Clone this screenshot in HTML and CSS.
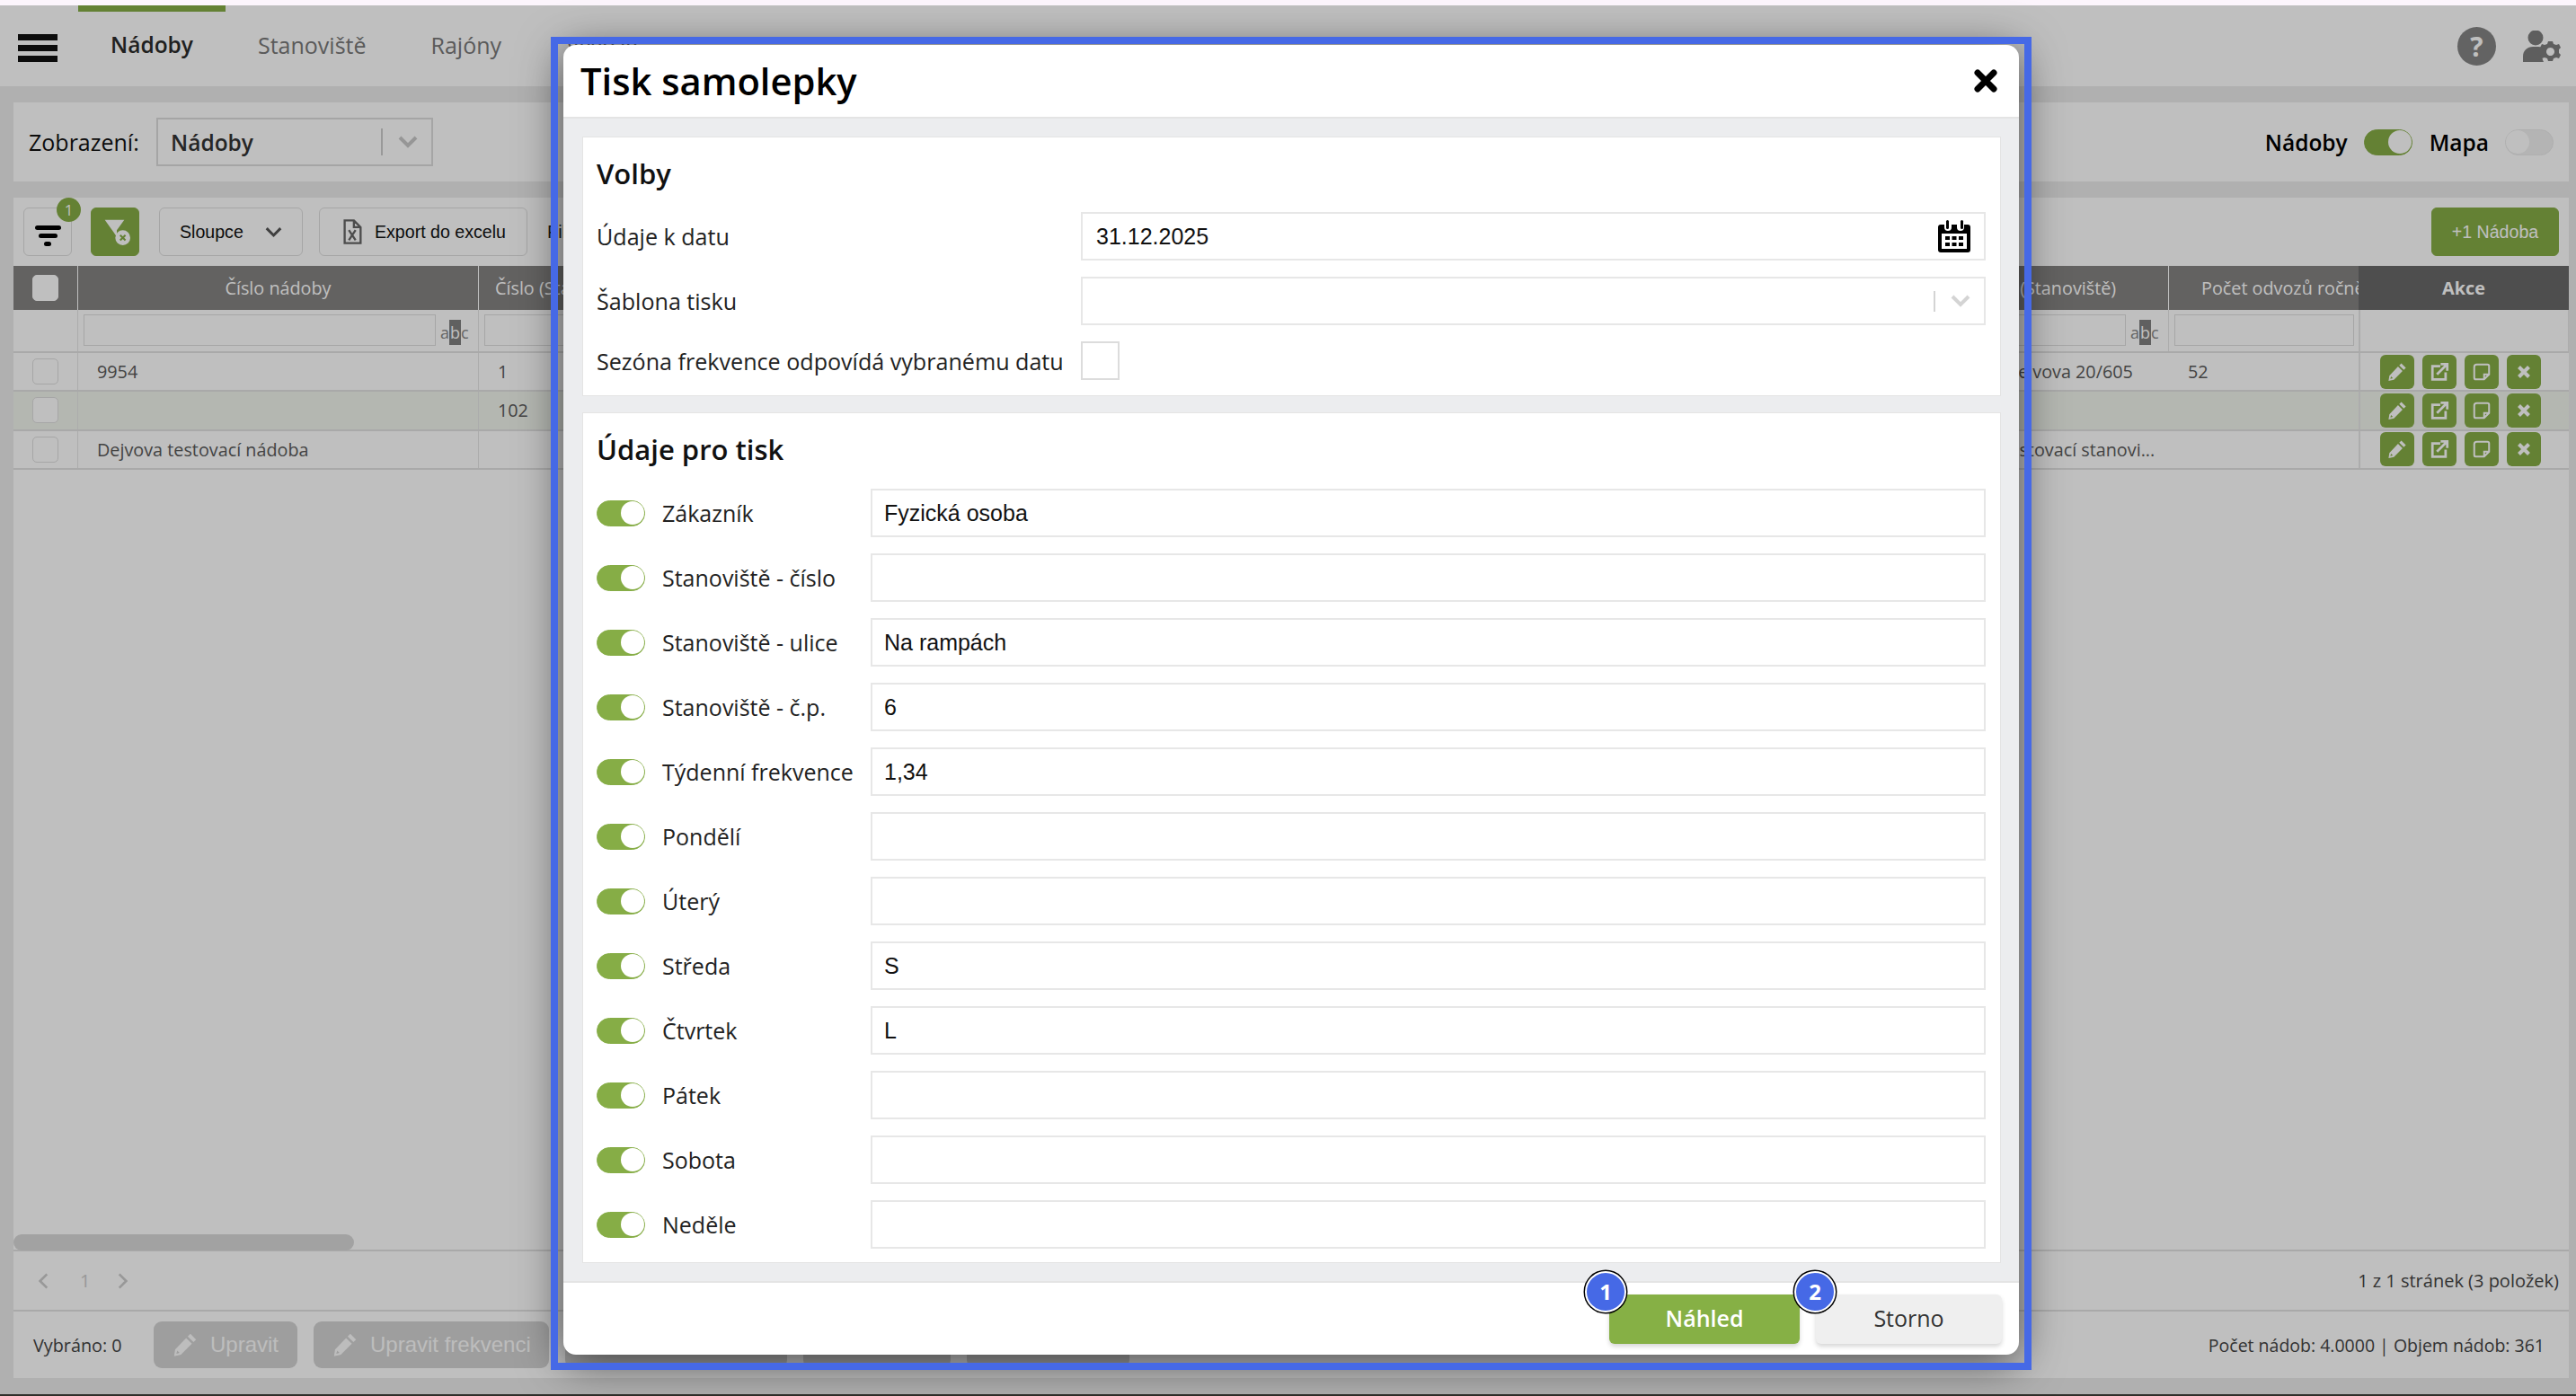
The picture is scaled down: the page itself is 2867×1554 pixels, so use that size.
FILE: index.html
```html
<!DOCTYPE html>
<html lang="cs">
<head>
<meta charset="utf-8">
<title>Tisk samolepky</title>
<link rel="stylesheet" href="styles.css">
</head>
<body>
<div class="strip-top"></div>
<div class="app">
  <nav class="nav">
    <div class="burger"><span></span><span></span><span></span></div>
    <a class="tab tab-active">Nádoby</a>
    <a class="tab">Stanoviště</a>
    <a class="tab">Rajóny</a>
    <a class="tab">Vývozy</a>
    <div class="nav-right">
      <span class="help">?</span>
      <svg class="user-gear" viewBox="0 0 42 35"><circle cx="14" cy="8" r="8.5"/><path d="M0 35v-6c0-7 5-11 11-11h6c3 0 5 1 7 2-3 3-4 9-1 15z"/><path fill-rule="evenodd" d="M28 12h5l1 3 3 1 3-1 2 4-2 2v4l2 2-2 4-3-1-3 1-1 3h-5l-1-3-3-1-3 1-2-4 2-2v-4l-2-2 2-4 3 1 3-1zM30.500 19a4.500 4.500 0 1 0 .01 0z"/></svg>
    </div>
  </nav>
  <div class="content">
    <section class="panel view-bar">
      <label class="view-label">Zobrazení:</label>
      <div class="select-box">
        <span class="select-value">Nádoby</span>
        <span class="select-sep"></span>
        <svg class="chev chev-bg" viewBox="0 0 22 14"><path d="M2 2l9 9 9-9"/></svg>
      </div>
      <div class="view-switch">
        <span class="switch-label">Nádoby</span>
        <span class="toggle"><i></i></span>
        <span class="switch-label">Mapa</span>
        <span class="toggle toggle-off"><i></i></span>
      </div>
    </section>

    <section class="panel main-panel">
      <div class="toolbar">
        <button class="tool tool-filter">
          <span class="bars"><i></i><i></i><i></i></span>
          <span class="count">1</span>
        </button>
        <button class="tool tool-green">
          <svg class="funnel" viewBox="0 0 36 38"><path d="M2 3h26l-10 14v9l-4-6z" class="fn-fill"/><circle cx="26" cy="27" r="10" class="fn-fill"/><path d="M22.500 23.500l7 7M29.500 23.500l-7 7" class="fn-x"/></svg>
        </button>
        <button class="tool tool-text tool-columns">Sloupce
          <svg class="chev chev-tool" viewBox="0 0 22 14"><path d="M2 2l9 9 9-9"/></svg>
        </button>
        <button class="tool tool-text tool-export">
          <svg class="file" viewBox="0 0 23 30"><path d="M2.500 1.500h11l8 8v19h-19z M13.500 1.500v8h8" class="file-line"/><path d="M7.500 13l8 12M15.500 13l-8 12" class="file-x"/></svg>
          Export do excelu
        </button>
        <span class="tool-more">Filtr</span>
        <button class="tool tool-add">+1 Nádoba</button>
      </div>

      <div class="t-row t-head">
        <div class="cell cell-check"><span class="check check-head"></span></div>
        <div class="cell cell-center">Číslo nádoby</div>
        <div class="cell cell-left-head">Číslo (Stanoviště)</div>
        <div class="cell"></div>
        <div class="cell cell-center cell-addr-head">Adresa (Stanoviště)</div>
        <div class="cell cell-clip">Počet odvozů ročně</div>
        <div class="cell cell-actions-head">Akce</div>
      </div>

      <div class="t-row t-filter">
        <div class="cell"></div>
        <div class="cell cell-f"><span class="f-input"></span><span class="abc">a<b>b</b>c</span></div>
        <div class="cell cell-f"><span class="f-input"></span><span class="abc">a<b>b</b>c</span></div>
        <div class="cell"></div>
        <div class="cell cell-f"><span class="f-input"></span><span class="abc">a<b>b</b>c</span></div>
        <div class="cell cell-f"><span class="f-input"></span></div>
        <div class="cell cell-act"></div>
      </div>

      <div class="t-row t-data">
        <div class="cell cell-check"><span class="check"></span></div>
        <div class="cell">9954</div>
        <div class="cell">1</div>
        <div class="cell"></div>
        <div class="cell cell-addr">Praha 6, Dejvova 20/605</div>
        <div class="cell">52</div>
        <div class="cell cell-act">
          <span class="act"><svg viewBox="0 0 24 24"><path d="M17 1.500l5.500 5.500-2.500 2.500-5.500-5.500zM13 5.500l5.500 5.500L8 21.500l-6.500 1.500 1-6.500zM4.500 17.500l-.8 3 3-.8z" fill-rule="evenodd"/></svg></span>
          <span class="act"><svg viewBox="0 0 24 24"><path class="ln" d="M13 5H3.500v16h16v-8.500M9 15L21 3M13.500 2.500h8v8"/></svg></span>
          <span class="act"><svg viewBox="0 0 24 24"><path class="ln ln-thin" d="M6 3h13a2 2 0 0 1 2 2v10l-6 6H5a2 2 0 0 1-2-2V6a3 3 0 0 1 3-3zM21 15h-6v6"/></svg></span>
          <span class="act"><svg viewBox="0 0 24 24"><path class="ln ln-x" d="M6 6l12 12M18 6L6 18"/></svg></span>
        </div>
      </div>

      <div class="t-row t-data t-hl">
        <div class="cell cell-check"><span class="check"></span></div>
        <div class="cell"></div>
        <div class="cell">102</div>
        <div class="cell"></div>
        <div class="cell"></div>
        <div class="cell"></div>
        <div class="cell cell-act">
          <span class="act"><svg viewBox="0 0 24 24"><path d="M17 1.500l5.500 5.500-2.500 2.500-5.500-5.500zM13 5.500l5.500 5.500L8 21.500l-6.500 1.500 1-6.500zM4.500 17.500l-.8 3 3-.8z" fill-rule="evenodd"/></svg></span>
          <span class="act"><svg viewBox="0 0 24 24"><path class="ln" d="M13 5H3.500v16h16v-8.500M9 15L21 3M13.500 2.500h8v8"/></svg></span>
          <span class="act"><svg viewBox="0 0 24 24"><path class="ln ln-thin" d="M6 3h13a2 2 0 0 1 2 2v10l-6 6H5a2 2 0 0 1-2-2V6a3 3 0 0 1 3-3zM21 15h-6v6"/></svg></span>
          <span class="act"><svg viewBox="0 0 24 24"><path class="ln ln-x" d="M6 6l12 12M18 6L6 18"/></svg></span>
        </div>
      </div>

      <div class="t-row t-data">
        <div class="cell cell-check"><span class="check"></span></div>
        <div class="cell">Dejvova testovací nádoba</div>
        <div class="cell"></div>
        <div class="cell"></div>
        <div class="cell cell-addr">Dejvova testovací stanovi...</div>
        <div class="cell"></div>
        <div class="cell cell-act">
          <span class="act"><svg viewBox="0 0 24 24"><path d="M17 1.500l5.500 5.500-2.500 2.500-5.500-5.500zM13 5.500l5.500 5.500L8 21.500l-6.500 1.500 1-6.500zM4.500 17.500l-.8 3 3-.8z" fill-rule="evenodd"/></svg></span>
          <span class="act"><svg viewBox="0 0 24 24"><path class="ln" d="M13 5H3.500v16h16v-8.500M9 15L21 3M13.500 2.500h8v8"/></svg></span>
          <span class="act"><svg viewBox="0 0 24 24"><path class="ln ln-thin" d="M6 3h13a2 2 0 0 1 2 2v10l-6 6H5a2 2 0 0 1-2-2V6a3 3 0 0 1 3-3zM21 15h-6v6"/></svg></span>
          <span class="act"><svg viewBox="0 0 24 24"><path class="ln ln-x" d="M6 6l12 12M18 6L6 18"/></svg></span>
        </div>
      </div>

      <div class="t-spacer"></div>
      <div class="scroll-track"><div class="scroll-thumb"></div></div>

      <div class="pager">
        <svg class="pg-arrow" viewBox="0 0 14 22"><path d="M12 2L3 11l9 9"/></svg>
        <span class="pg-num">1</span>
        <svg class="pg-arrow" viewBox="0 0 14 22"><path d="M2 2l9 9-9 9"/></svg>
        <span class="pg-info">1 z 1 stránek (3 položek)</span>
      </div>

      <div class="grid-foot">
        <span class="selected">Vybráno: 0</span>
        <button class="off-btn off-1"><svg viewBox="0 0 24 24"><path d="M17 1.500l5.500 5.500-2.500 2.500-5.500-5.500zM13 5.500l5.500 5.500L8 21.500l-6.500 1.500 1-6.500zM4.500 17.500l-.8 3 3-.8z" fill-rule="evenodd"/></svg>Upravit</button>
        <button class="off-btn off-2"><svg viewBox="0 0 24 24"><path d="M17 1.500l5.500 5.500-2.500 2.500-5.500-5.500zM13 5.500l5.500 5.500L8 21.500l-6.500 1.500 1-6.500zM4.500 17.500l-.8 3 3-.8z" fill-rule="evenodd"/></svg>Upravit frekvenci</button>
        <button class="off-btn off-3"></button>
        <button class="off-btn off-4"></button>
        <button class="off-btn off-5"></button>
        <span class="totals">Počet nádob: 4.0000 | Objem nádob: 361</span>
      </div>
    </section>
  </div>
  <div class="backdrop"></div>
</div>
<div class="strip-bottom"></div>

<div class="modal">
  <header class="m-head">
    <h1>Tisk samolepky</h1>
    <svg class="m-close" viewBox="0 0 26 26"><path d="M4 4l18 18M22 4L4 22"/></svg>
  </header>
  <div class="m-body">
    <section class="card">
      <h2>Volby</h2>
      <div class="opt-row">
        <label>Údaje k datu</label>
        <div class="field field-date">
          <input class="inp" value="31.12.2025" readonly>
          <svg class="cal" viewBox="0 0 36 36"><path fill-rule="evenodd" d="M3 5h4v3a4 4 0 0 0 8 0V5h6v3a4 4 0 0 0 8 0V5h4a3 3 0 0 1 3 3v25a3 3 0 0 1-3 3H3a3 3 0 0 1-3-3V8a3 3 0 0 1 3-3zM4 15v17h28V15z"/><rect x="9" y="0" width="3" height="10" rx="1.500"/><rect x="25" y="0" width="3" height="10" rx="1.500"/><path d="M8 18h5v4H8zM15.500 18h5v4h-5zM23 18h5v4h-5zM8 25h5v4H8zM15.500 25h5v4h-5zM23 25h5v4h-5z"/></svg>
        </div>
      </div>
      <div class="opt-row">
        <label>Šablona tisku</label>
        <div class="field field-select">
          <span class="select-sep select-sep-m"></span>
          <svg class="chev chev-m" viewBox="0 0 22 14"><path d="M2 2l9 9 9-9"/></svg>
        </div>
      </div>
      <div class="opt-row opt-last">
        <label>Sezóna frekvence odpovídá vybranému datu</label>
        <span class="box"></span>
      </div>
    </section>

    <section class="card card-print">
      <h2 class="h-print">Údaje pro tisk</h2>
      <div class="p-row"><span class="toggle toggle-m"><i></i></span><label>Zákazník</label><input class="inp" value="Fyzická osoba" readonly></div>
      <div class="p-row"><span class="toggle toggle-m"><i></i></span><label>Stanoviště - číslo</label><input class="inp" value="" readonly></div>
      <div class="p-row"><span class="toggle toggle-m"><i></i></span><label>Stanoviště - ulice</label><input class="inp" value="Na rampách" readonly></div>
      <div class="p-row"><span class="toggle toggle-m"><i></i></span><label>Stanoviště - č.p.</label><input class="inp" value="6" readonly></div>
      <div class="p-row"><span class="toggle toggle-m"><i></i></span><label>Týdenní frekvence</label><input class="inp" value="1,34" readonly></div>
      <div class="p-row"><span class="toggle toggle-m"><i></i></span><label>Pondělí</label><input class="inp" value="" readonly></div>
      <div class="p-row"><span class="toggle toggle-m"><i></i></span><label>Úterý</label><input class="inp" value="" readonly></div>
      <div class="p-row"><span class="toggle toggle-m"><i></i></span><label>Středa</label><input class="inp" value="S" readonly></div>
      <div class="p-row"><span class="toggle toggle-m"><i></i></span><label>Čtvrtek</label><input class="inp" value="L" readonly></div>
      <div class="p-row"><span class="toggle toggle-m"><i></i></span><label>Pátek</label><input class="inp" value="" readonly></div>
      <div class="p-row"><span class="toggle toggle-m"><i></i></span><label>Sobota</label><input class="inp" value="" readonly></div>
      <div class="p-row"><span class="toggle toggle-m"><i></i></span><label>Neděle</label><input class="inp" value="" readonly></div>
    </section>
  </div>
  <footer class="m-foot">
    <button class="m-btn m-primary">Náhled<span class="step step-1">1</span></button>
    <button class="m-btn m-second">Storno<span class="step step-2">2</span></button>
  </footer>
</div>
<div class="frame"></div>
</body>
</html>
```

FILE: styles.css
```css
* { box-sizing: border-box; }
html, body { margin: 0; padding: 0; }
body {
  width: 2867px;
  height: 1554px;
  overflow: hidden;
  position: relative;
  font-family: "Open Sans", "Noto Sans", sans-serif;
  background: #ebebeb;
  color: #222;
}
button { font: inherit; margin: 0; }
h1, h2 { margin: 0; }

.strip-top { height: 6px; background: #fcf5fc; }
.strip-bottom { height: 2px; background: #2f2f2a; }
.app { position: relative; height: 1546px; display: flex; flex-direction: column; background: #ebebeb; }
.backdrop { position: absolute; inset: 0; background: rgba(0,0,0,.25); }

/* nav */
.nav { height: 90px; flex: none; background: #fff; display: flex; align-items: stretch; padding-left: 20px; padding-right: 17px; }
.burger { width: 44px; margin-right: 23px; padding-top: 32px; display: flex; flex-direction: column; gap: 3px; }
.burger span { height: 7px; background: #111; display: block; margin-bottom: 2px; }
.tab { border-top: 7px solid transparent; padding: 0 36px 7px; font-size: 25px; line-height: 74px; color: #787878; }
.tab-active { border-top-color: #86ad46; color: #2b2b2b; font-weight: 600; font-size: 24.500px; }
.nav-right { margin-left: auto; display: flex; align-items: center; gap: 30px; }
.help { width: 43px; height: 43px; border-radius: 50%; background: #858585; color: #fff; font-weight: 700; font-size: 30px; line-height: 43px; text-align: center; }
.user-gear { width: 42px; height: 35px; fill: #7e7e7e; }

.content { flex: 1; min-height: 0; padding: 18px 8px 18px 15px; display: flex; flex-direction: column; gap: 18px; }
.panel { background: #fff; }

/* view bar */
.view-bar { height: 88px; flex: none; display: flex; align-items: center; padding-left: 17px; padding-right: 17px; }
.view-label { font-size: 25px; color: #111; width: 142px; }
.select-box { width: 308px; height: 54px; border: 2px solid #dcdcdc; display: flex; align-items: center; position: relative; padding-left: 14px; }
.select-value { font-size: 24.500px; font-weight: 600; color: #333; flex: 1; }
.select-sep { width: 2px; height: 30px; background: #ccc; display: block; }
.chev { fill: none; stroke-width: 4; }
.chev-bg { width: 22px; height: 14px; stroke: #c8c8c8; margin: 0 15px 0 17px; }
.view-switch { margin-left: auto; display: flex; align-items: center; }
.switch-label { font-size: 24.500px; font-weight: 600; color: #000; }
.toggle { display: block; flex: none; width: 54px; height: 29px; border-radius: 15px; background: #86ad46; position: relative; border: 1.500px solid #86ad46; margin-left: 18px; margin-right: 19px; }
.toggle i { position: absolute; right: 0; top: 0; width: 26px; height: 26px; border-radius: 50%; background: #fff; }
.toggle-off { background: #f0f0f0; border-color: #eaeaea; margin-right: 0; }
.toggle-off i { right: auto; left: 0; }

/* toolbar */
.main-panel { flex: 1; min-height: 0; display: flex; flex-direction: column; }
.toolbar { height: 76px; flex: none; display: flex; align-items: center; padding: 0 11px; position: relative; }
.tool { height: 54px; border-radius: 6px; border: 1.500px solid #dedede; background: #fff; position: relative; display: flex; align-items: center; padding: 0; font-family: "Liberation Sans", Arial, sans-serif; font-size: 19.600px; color: #111; }
.tool-filter { width: 54px; justify-content: center; }
.bars { display: flex; flex-direction: column; align-items: center; gap: 4px; margin-top: 8px; }
.bars i { display: block; height: 5px; border-radius: 3px; background: #000; }
.bars i:nth-child(1) { width: 29px; }
.bars i:nth-child(2) { width: 21px; }
.bars i:nth-child(3) { width: 8px; }
.count { position: absolute; left: 36px; top: -12px; width: 27px; height: 27px; border-radius: 50%; background: #86ad46; color: #fff; font-family: "Open Sans", sans-serif; font-size: 17px; line-height: 27px; text-align: center; }
.tool-green { width: 54px; margin-left: 21px; background: #86ad46; border-color: #86ad46; justify-content: center; }
.funnel { width: 30px; height: 32px; margin-left: 4px; }
.fn-fill { fill: #fff; }
.fn-x { stroke: #86ad46; stroke-width: 2.500; fill: none; }
.tool-text { padding-left: 22px; }
.tool-columns { width: 160px; margin-left: 22px; }
.chev-tool { width: 19px; height: 13px; stroke: #555; stroke-width: 3.500; margin-left: 24px; }
.tool-export { width: 232px; margin-left: 18px; padding-left: 25px; gap: 14px; }
.file { width: 22px; height: 28px; }
.file-line { fill: none; stroke: #666; stroke-width: 2.500; }
.file-x { fill: none; stroke: #666; stroke-width: 2.500; }
.tool-more { margin-left: 22px; font-family: "Liberation Sans", Arial, sans-serif; font-size: 20px; color: #222; }
.tool-add { margin-left: auto; width: 142px; background: #86ad46; border-color: #86ad46; color: #fff; justify-content: center; }

/* table */
.t-row { display: grid; grid-template-columns: 72px 446px 300px 1280px 301px 211px 234px; flex: none; }
.cell { display: flex; align-items: center; min-width: 0; font-size: 19.800px; padding-left: 21px; white-space: nowrap; overflow: hidden; }
.t-head { height: 49px; background: #858382; }
.t-head .cell { color: #fff; border-right: 1px solid #fff; }
.t-head .cell-center { justify-content: center; padding-left: 0; }
.t-head .cell:nth-child(3), .t-head .cell:nth-child(4) { border-right: 0; }
.t-head .cell-addr-head { padding-left: 8px; }
.t-head .cell-clip { padding-left: 36px; border-right: 0; }
.t-head .cell-left-head { padding-left: 18px; }
.t-head .cell-actions-head { background: #696969; font-weight: 700; justify-content: center; padding-left: 0; border-right: 0; }
.check { width: 29px; height: 29px; border: 1.500px solid #dedede; border-radius: 5px; background: #fff; display: block; }
.check-head { border-color: #fff; }
.t-filter { height: 48px; border-bottom: 2px solid #e2e2e2; }
.t-filter .cell { border-right: 1px solid #e6e6e6; padding-left: 6px; align-items: flex-start; padding-top: 5px; }
.t-filter .cell:nth-child(3), .t-filter .cell:nth-child(4), .t-filter .cell:nth-child(6) { border-right: 0; }
.f-input { flex: 1; height: 35px; border: 1.500px solid #dedede; display: block; margin-right: 5px; }
.abc { font-size: 18px; color: #888; width: 30px; flex: none; line-height: 28px; margin-top: 6px; margin-right: 12px; text-align: center; }
.abc b { background: #808080; color: #fff; font-weight: 400; padding: 2px 1px; }
.t-filter .cell:last-child { padding-left: 0; }
.t-data { height: 43.330px; border-bottom: 2px solid #e2e2e2; color: #5a5a5a; }
.t-data .cell { color: #5a5a5a; }
.t-data .cell:first-child, .t-data .cell:nth-child(2) { border-right: 1px solid #e6e6e6; }
.t-data .cell-addr { padding-left: 38px; }
.t-hl { background: #f1f4ec; }
.cell-act { border-left: 2px solid #e6e6e6; padding-left: 22px; gap: 9px; }
.act { width: 38px; height: 38px; border-radius: 6px; background: #86ad46; display: flex; align-items: center; justify-content: center; flex: none; }
.act svg { width: 22px; height: 22px; fill: #fff; }
.ln { fill: none; stroke: #fff; stroke-width: 3; }
.ln-thin { stroke-width: 2.200; }
.ln-x { stroke-width: 4.500; }
.t-spacer { flex: 1; }
.scroll-track { height: 19px; flex: none; border-bottom: 2px solid #e2e2e2; }
.scroll-thumb { width: 379px; height: 18px; border-radius: 9px; background: #d9d9d9; }
.pager { height: 67px; flex: none; border-bottom: 2px solid #e2e2e2; display: flex; align-items: center; padding-left: 27px; padding-right: 11px; }
.pg-arrow { width: 12px; height: 20px; fill: none; stroke: #cbcbcb; stroke-width: 3; }
.pg-num { font-size: 20px; color: #cbcbcb; margin: 0 31px 0 35px; }
.pg-info { margin-left: auto; font-size: 20px; color: #444; }
.grid-foot { height: 74px; flex: none; display: flex; align-items: center; padding-left: 22px; padding-right: 27px; }
.selected { font-size: 19.800px; color: #444; width: 134px; flex: none; }
.off-btn { height: 52px; border: 0; border-radius: 9px; background: #d3d3d3; color: #fcfcfc; font-family: "Liberation Sans", Arial, sans-serif; font-size: 24px; display: flex; align-items: center; padding: 0 0 0 21px; margin-right: 18px; flex: none; }
.off-btn svg { width: 28px; height: 28px; fill: #fcfcfc; margin-right: 14px; }
.off-1 { width: 160px; }
.off-2 { width: 262px; }
.off-3 { width: 247px; }
.off-4 { width: 164px; }
.off-5 { width: 181px; }
.totals { margin-left: auto; font-size: 19.500px; color: #444; }

/* modal */
.modal { position: absolute; left: 627px; top: 50px; width: 1620px; height: 1458px; background: #fff; border-radius: 14px; box-shadow: 0 8px 50px rgba(0,0,0,.62); display: flex; flex-direction: column; overflow: hidden; }
.frame { position: absolute; left: 613px; top: 41px; width: 1648px; height: 1484px; border: 8px solid #4669e6; pointer-events: none; }
.m-head { height: 82px; flex: none; border-bottom: 2px solid #e4e4e4; display: flex; align-items: center; padding: 0 24px 0 19px; }
.m-head h1 { font-size: 41.700px; font-weight: 600; color: #000; line-height: 82px; }
.m-close { width: 26px; height: 26px; margin-left: auto; fill: none; stroke: #000; stroke-width: 7; stroke-linecap: round; }
.m-body { flex: 1; min-height: 0; background: #ecedef; padding: 20px 20px 0 21px; display: flex; flex-direction: column; gap: 18px; }
.card { background: #fff; border: 1.500px solid #e4e4e4; padding: 0 16px 0 15px; height: 289px; flex: none; }
.card-print { height: 947px; }
.card h2 { font-size: 31px; font-weight: 600; color: #111; line-height: 80px; height: 83px; }
.h-print.h-print { height: 84px; }
.opt-row { display: flex; align-items: center; margin-bottom: 18px; }
.opt-row label { width: 539px; flex: none; font-size: 25.100px; color: #222; }
.opt-last { margin-bottom: 0; }
.field { flex: 1; height: 54px; position: relative; display: flex; align-items: center; }
.inp { flex: 1; width: 100%; min-width: 0; height: 54px; border: 2px solid #e7e7e7; background: #fff; outline: 0; padding: 0 13px; font-family: "Liberation Sans", Arial, sans-serif; font-size: 25px; color: #111; }
.field-date .inp { padding-left: 15px; }
.cal { position: absolute; right: 17px; top: 9px; width: 36px; height: 36px; fill: #000; }
.field-select { border: 2px solid #e7e7e7; justify-content: flex-end; }
.select-sep-m { height: 23px; background: #d4d4d4; }
.chev-m { width: 22px; height: 14px; stroke: #d4d4d4; margin: 0 15px 0 17px; }
.box { width: 43px; height: 43px; border: 2px solid #dcdcdc; display: block; }
.p-row { display: flex; align-items: center; height: 54px; margin-bottom: 18px; }
.p-row:last-child { margin-bottom: 0; }
.p-row label { width: 232px; flex: none; font-size: 25px; color: #222; }
.toggle-m { margin: 0 19px 0 0; }
.m-foot { height: 82px; flex: none; border-top: 2px solid #e4e4e4; display: flex; align-items: flex-start; justify-content: flex-end; gap: 18px; padding: 13px 19px 0 0; }
.m-btn { height: 55px; border: 0; border-radius: 6px; font-size: 25px; line-height: 53px; padding: 0 0 2px; position: relative; box-shadow: 0 3px 5px rgba(0,0,0,.16); font-weight: 600; }
.m-primary { width: 212px; background: #86b045; color: #fff; }
.m-second { width: 207px; background: #efefef; color: #333; font-weight: 500; }
.step { position: absolute; top: -26px; width: 46px; height: 46px; border-radius: 50%; background: #4669e6; color: #fff; font-weight: 700; font-size: 24px; line-height: 42px; text-align: center; border: 2px solid #fff; box-shadow: 0 0 0 1.500px #000; }
.step-1 { left: -27px; }
.step-2 { left: -24px; }
```
